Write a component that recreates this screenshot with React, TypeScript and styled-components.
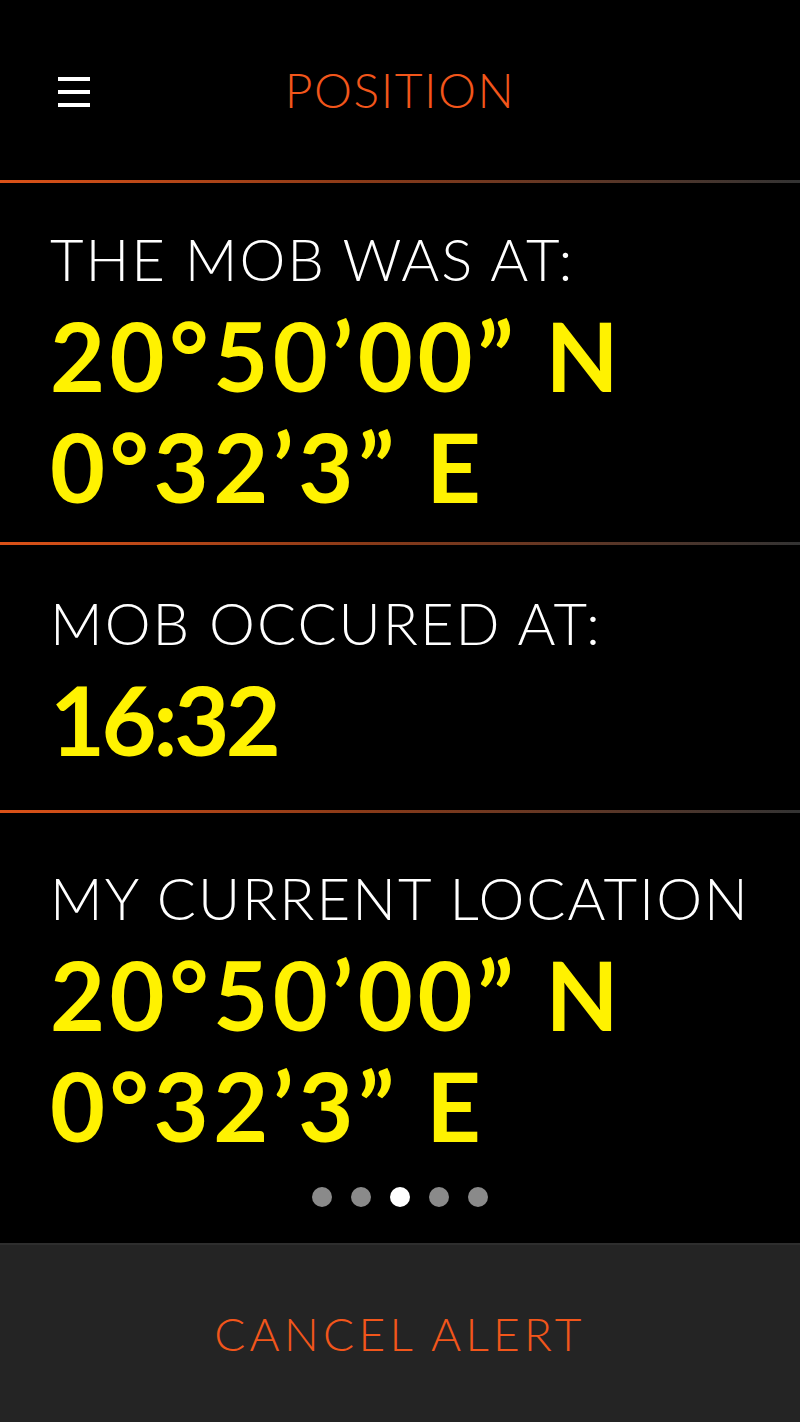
import React from 'react'
import styled, { createGlobalStyle } from 'styled-components'

const GlobalStyle = createGlobalStyle`
  html, body {
    margin: 0;
    padding: 0;
    background: #000;
  }
  body {
    font-family: Lato, 'Liberation Sans', sans-serif;
  }
`

const Screen = styled.div`
  width: 800px;
  height: 1422px;
  background: #000;
  display: flex;
  flex-direction: column;
  overflow: hidden;
`

const Header = styled.header`
  height: 180px;
  display: flex;
  align-items: center;
  justify-content: center;
  position: relative;
`

const MenuButton = styled.button`
  position: absolute;
  left: 58px;
  top: 77px;
  width: 32px;
  height: 30px;
  padding: 0;
  border: 0;
  background: transparent;
  display: flex;
  flex-direction: column;
  justify-content: space-between;

  span {
    display: block;
    height: 4px;
    background: #fff;
  }
`

const Title = styled.h1`
  margin: 0;
  font-size: 48px;
  font-weight: 300;
  line-height: 60px;
  color: #f2561b;
  letter-spacing: 1.5px;
`

const Divider = styled.div`
  height: 3px;
  background: linear-gradient(90deg, #dc5218 0%, #8a3a18 45%, #333 100%);
`

const Section = styled.section<{ $top: number; $bottom: number }>`
  padding: ${(p) => p.$top}px 50px ${(p) => p.$bottom}px;
  display: flex;
  flex-direction: column;
  gap: 6px;
`

const Label = styled.div`
  font-size: 58px;
  font-weight: 300;
  line-height: 70px;
  color: #fff;
  letter-spacing: 2px;
  white-space: nowrap;
`

const Value = styled.div<{ $tracking?: number }>`
  font-size: 95px;
  font-weight: 700;
  line-height: 111px;
  color: #fff200;
  letter-spacing: ${(p) => p.$tracking ?? 4.5}px;
  white-space: nowrap;
`

const Dots = styled.div`
  display: flex;
  justify-content: center;
  gap: 19px;
  margin-top: 26px;
`

const Dot = styled.span<{ $active?: boolean }>`
  width: 20px;
  height: 20px;
  border-radius: 50%;
  background: ${(p) => (p.$active ? '#fff' : '#8a8a8a')};
`

const Footer = styled.button`
  margin-top: auto;
  height: 179px;
  border: 0;
  border-top: 2px solid #2e2e2e;
  background: #242424;
  color: #f2561b;
  font-family: inherit;
  font-size: 46px;
  font-weight: 300;
  letter-spacing: 4.3px;
  display: flex;
  align-items: center;
  justify-content: center;
`

export default function App() {
  return (
    <>
      <GlobalStyle />
      <Screen>
        <Header>
          <MenuButton aria-label="menu">
            <span />
            <span />
            <span />
          </MenuButton>
          <Title>POSITION</Title>
        </Header>
        <Divider />
        <Section $top={41} $bottom={20}>
          <Label>THE MOB WAS AT:</Label>
          <Value>
            20°50’00” N
            <br />
            0°32’3” E
          </Value>
        </Section>
        <Divider />
        <Section $top={43} $bottom={35}>
          <Label>MOB OCCURED AT:</Label>
          <Value $tracking={-3.5}>16:32</Value>
        </Section>
        <Divider />
        <Section $top={50} $bottom={0}>
          <Label>MY CURRENT LOCATION</Label>
          <Value>
            20°50’00” N
            <br />
            0°32’3” E
          </Value>
        </Section>
        <Dots>
          <Dot />
          <Dot />
          <Dot $active />
          <Dot />
          <Dot />
        </Dots>
        <Footer>CANCEL ALERT</Footer>
      </Screen>
    </>
  )
}
